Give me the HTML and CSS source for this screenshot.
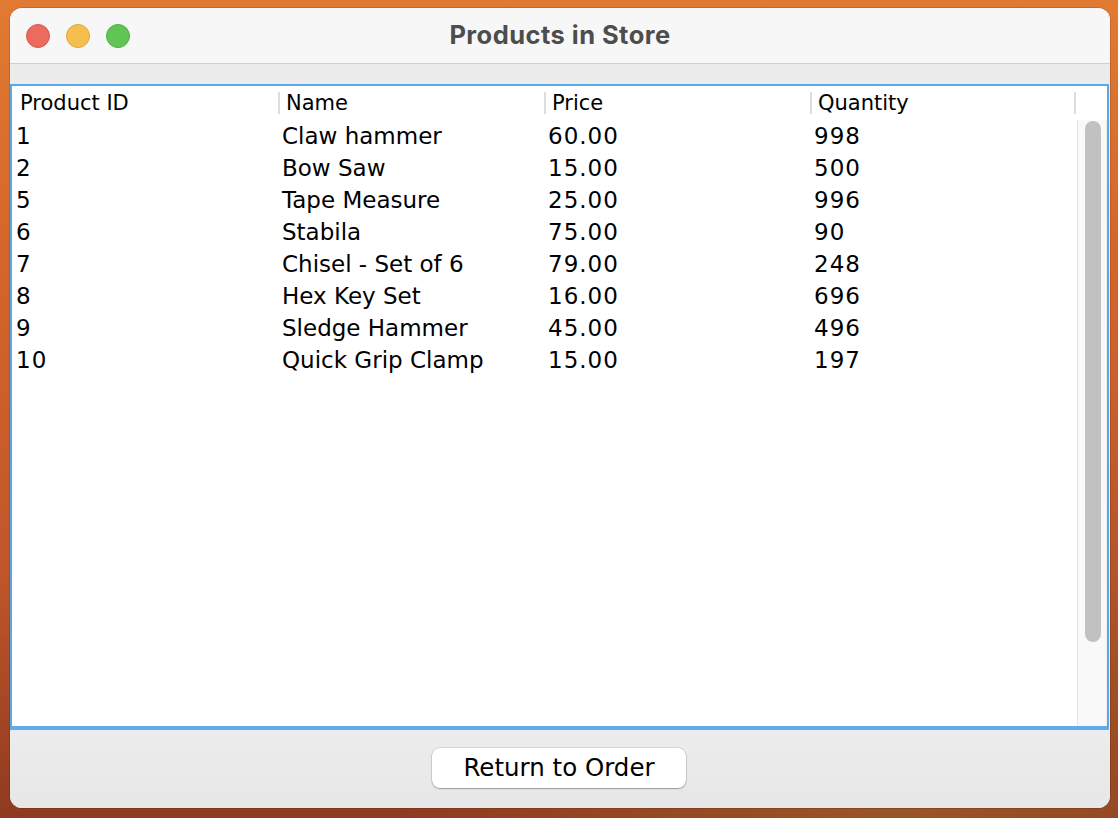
FILE: index.html
```html
<!DOCTYPE html>
<html>
<head>
<meta charset="utf-8">
<title>Products in Store</title>
<link rel="stylesheet" href="styles.css">
</head>
<body>
<div class="desktop">
  <div class="window">
    <div class="titlebar">
      <div class="lights">
        <span class="light red"></span>
        <span class="light yellow"></span>
        <span class="light green"></span>
      </div>
      <div class="title">Products in Store</div>
    </div>
    <div class="band"></div>
    <div class="panel">
      <div class="thead">
        <div class="th first">Product ID</div>
        <div class="th">Name</div>
        <div class="th">Price</div>
        <div class="th last">Quantity</div>
        <div class="th end"></div>
      </div>
      <div class="tbody-wrap">
        <div class="tbody">
          <div class="tr"><div class="td first num">1</div><div class="td">Claw hammer</div><div class="td num">60.00</div><div class="td num">998</div></div>
          <div class="tr"><div class="td first num">2</div><div class="td">Bow Saw</div><div class="td num">15.00</div><div class="td num">500</div></div>
          <div class="tr"><div class="td first num">5</div><div class="td">Tape Measure</div><div class="td num">25.00</div><div class="td num">996</div></div>
          <div class="tr"><div class="td first num">6</div><div class="td">Stabila</div><div class="td num">75.00</div><div class="td num">90</div></div>
          <div class="tr"><div class="td first num">7</div><div class="td">Chisel - Set of 6</div><div class="td num">79.00</div><div class="td num">248</div></div>
          <div class="tr"><div class="td first num">8</div><div class="td">Hex Key Set</div><div class="td num">16.00</div><div class="td num">696</div></div>
          <div class="tr"><div class="td first num">9</div><div class="td">Sledge Hammer</div><div class="td num">45.00</div><div class="td num">496</div></div>
          <div class="tr"><div class="td first num">10</div><div class="td">Quick Grip Clamp</div><div class="td num">15.00</div><div class="td num">197</div></div>
        </div>
        <div class="scrollbar"><div class="thumb"></div></div>
      </div>
    </div>
    <div class="footer">
      <button class="btn">Return to Order</button>
    </div>
  </div>
</div>
</body>
</html>
```
FILE: styles.css
```css
html, body {
  margin: 0;
  padding: 0;
  width: 1118px;
  height: 818px;
  overflow: hidden;
}
.desktop {
  width: 1118px;
  height: 818px;
  background:
    radial-gradient(ellipse at 80% 100%, #9a5526 0%, rgba(154,85,38,0) 40%),
    linear-gradient(180deg, #e17a33 0%, #d5662b 30%, #c0562a 70%, #8f3a1f 100%);
  padding: 8px 0 0 10px;
  box-sizing: border-box;
}
.window {
  width: 1100px;
  height: 800px;
  border-radius: 12px;
  overflow: hidden;
  background: #ececec;
  display: flex;
  flex-direction: column;
  box-shadow: 0 0 0 0.5px rgba(0,0,0,0.25);
}
.titlebar {
  height: 55px;
  flex: none;
  background: #f7f7f7;
  border-bottom: 1px solid #cfcfcf;
  display: flex;
  align-items: center;
  justify-content: center;
  position: relative;
}
.lights {
  position: absolute;
  left: 16px;
  top: 16px;
  display: flex;
  gap: 16px;
}
.light {
  width: 24px;
  height: 24px;
  border-radius: 50%;
  box-sizing: border-box;
}
.red { background: #ec6a5e; border: 1px solid #d65a4f; }
.yellow { background: #f5bf4f; border: 1px solid #dea83f; }
.green { background: #61c554; border: 1px solid #52ad46; }
.title {
  font-family: Inter, "Liberation Sans", sans-serif;
  font-weight: 700;
  font-size: 25.5px;
  color: #4d4d4d;
  margin-top: -2px;
  letter-spacing: 0.45px;
}
.band {
  height: 20px;
  flex: none;
  background: #ececec;
}
.panel {
  height: 646px;
  flex: none;
  box-sizing: border-box;
  margin-right: 1px;
  border: 2px solid #5aa8e6;
  border-bottom: 4px solid #5eacec;
  background: #ffffff;
  display: flex;
  flex-direction: column;
  font-family: "DejaVu Sans", sans-serif;
  color: #000;
}
.thead {
  display: flex;
  height: 34px;
  flex: none;
  align-items: flex-start;
  padding-top: 6px;
  box-sizing: border-box;
}
.th {
  width: 266px;
  flex: none;
  box-sizing: border-box;
  font-size: 21px;
  padding-left: 6px;
  height: 22px;
  line-height: 22px;
  border-left: 2px solid #dddddd;
  white-space: nowrap;
}
.th.first {
  width: 266px;
  border-left: none;
  padding-left: 8px;
}
.th.last {
  width: 264px;
}
.th.end {
  flex: 1;
  padding: 0;
}
.tbody-wrap {
  flex: 1;
  display: flex;
  min-height: 0;
}
.tbody {
  flex: 1;
}
.tr {
  display: flex;
  height: 32px;
  align-items: center;
}
.td {
  width: 266px;
  flex: none;
  box-sizing: border-box;
  font-size: 23px;
  padding-left: 3px;
  white-space: nowrap;
}
.td.num {
  letter-spacing: 1px;
}
.td.first {
  width: 267px;
  padding-left: 4px;
}
.scrollbar {
  width: 30px;
  flex: none;
  box-sizing: border-box;
  background: #f9f9f9;
  border-left: 1px solid #e6e6e6;
  border-right: 1px solid #eeeeee;
  padding: 1px 0 0 7px;
  margin-right: 1px;
}
.thumb {
  width: 16px;
  height: 521px;
  border-radius: 8px;
  background: #c1c1c1;
}
.footer {
  flex: 1;
  background: linear-gradient(180deg, #ececec 0%, #e7e7e7 100%);
  display: flex;
  justify-content: center;
  align-items: flex-start;
  padding-top: 18px;
  padding-right: 2px;
  box-sizing: border-box;
}
.btn {
  width: 254px;
  height: 40px;
  border: none;
  border-radius: 8px;
  background: #ffffff;
  box-shadow: 0 0 0 0.5px rgba(0,0,0,0.18), 0 1px 1.5px rgba(0,0,0,0.28);
  font-family: "DejaVu Sans", sans-serif;
  font-size: 24.5px;
  color: #000;
  padding: 0;
  line-height: 40px;
}
```
